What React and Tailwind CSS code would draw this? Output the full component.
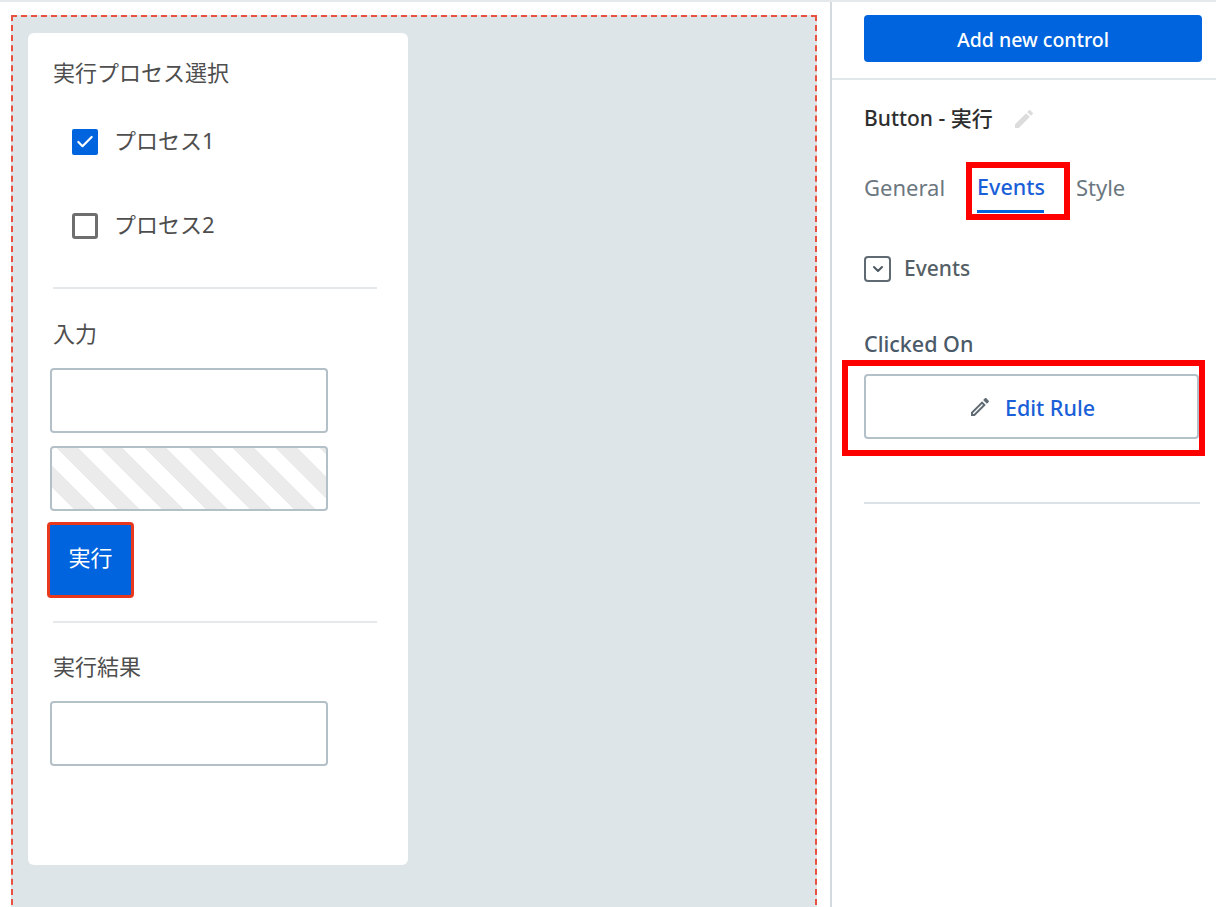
import { Check, ChevronDown } from "lucide-react";

const font = "font-['Noto_Sans','Noto_Sans_CJK_JP',sans-serif]";

function CheckRow({ label, checked }) {
  return (
    <div className="flex h-[26px] items-center gap-[16px] pl-[19px]">
      {checked ? (
        <span className="flex h-[26px] w-[26px] items-center justify-center rounded-[2px] bg-[#0064de]">
          <Check className="h-[20px] w-[20px] text-white" strokeWidth={2.6} />
        </span>
      ) : (
        <span className="h-[26px] w-[26px] rounded-[3px] border-[3px] border-[#6e6e6e] bg-white" />
      )}
      <span className="-mt-[5px] text-[22px] leading-[26px] text-[#4e4e4e]">{label}</span>
    </div>
  );
}

function TextBox({ striped }) {
  return (
    <div
      className={
        "h-[65px] w-[278px] rounded-[4px] border-2 border-[#b4c0c8] " +
        (striped
          ? "bg-[repeating-linear-gradient(45deg,#ffffff_0px,#ffffff_15.5px,#ebebeb_15.5px,#ebebeb_31px)]"
          : "bg-white")
      }
    />
  );
}

function EditIcon({ className }) {
  return (
    <svg viewBox="0 0 24 24" fill="currentColor" className={className}>
      <path d="M14.06 9.02l.92.92L5.92 19H5v-.92l9.06-9.06M17.66 3c-.25 0-.51.1-.7.29l-1.83 1.83 3.75 3.75 1.83-1.83c.39-.39.39-1.02 0-1.41l-2.34-2.34c-.2-.2-.45-.29-.71-.29zm-3.6 3.19L3 17.25V21h3.75L17.81 9.94l-3.75-3.75z" />
    </svg>
  );
}

function EditSolidIcon({ className }) {
  return (
    <svg viewBox="0 0 24 24" fill="currentColor" className={className}>
      <path d="M3 17.25V21h3.75L17.81 9.94l-3.75-3.75L3 17.25zM20.71 7.04a1 1 0 0 0 0-1.41l-2.34-2.34a1 1 0 0 0-1.41 0l-1.83 1.83 3.75 3.75 1.83-1.83z" />
    </svg>
  );
}

function Canvas() {
  return (
    <div className="h-full w-[830px] shrink-0 pl-[11px] pr-[13px] pt-[13px]">
      <div className="h-[900px] border-2 border-b-0 border-dashed border-[#e8503f] bg-[#dee5e9] pl-[15px] pt-[16px]">
        <div className="h-[832px] w-[380px] rounded-[6px] bg-white pl-[25px] pr-[31px] pt-[24px]">
          <div className="text-[22px] leading-[30px] text-[#4e4e4e]">実行プロセス選択</div>
          <div className="mt-[42px]">
            <CheckRow label="プロセス1" checked />
          </div>
          <div className="mt-[58px]">
            <CheckRow label="プロセス2" />
          </div>
          <div className="mt-[48px] h-[2px] bg-[#e6e9eb]" />
          <div className="mt-[29px] text-[22px] leading-[30px] text-[#4e4e4e]">入力</div>
          <div className="-ml-[3px] mt-[20px] flex flex-col items-start gap-[13px]">
            <TextBox />
            <TextBox striped />
          </div>
          <button className="-ml-[6px] mt-[11px] block h-[76px] w-[87px] rounded-[4px] border-[3px] border-[#e8391f] bg-[#0064de] pb-[6px] text-[22px] text-white">
            実行
          </button>
          <div className="mt-[23px] h-[2px] bg-[#e6e9eb]" />
          <div className="mt-[28px] text-[22px] leading-[30px] text-[#4e4e4e]">実行結果</div>
          <div className="-ml-[3px] mt-[20px]">
            <TextBox />
          </div>
        </div>
      </div>
    </div>
  );
}

function Sidebar() {
  return (
    <div className="relative h-full flex-1 border-l-2 border-[#d5dade]">
      <div className="h-[76px] pl-[32px] pt-[13px]">
        <button className="h-[47px] w-[338px] rounded-[4px] bg-[#0064de] pt-[2px] text-[19.5px] font-medium text-white">
          Add new control
        </button>
      </div>
      <div className="h-[2px] bg-[#e2e7ea]" />
      <div className="pl-[32px] pr-[16px]">
        <div className="mt-[23px] flex h-[32px] items-center gap-[19px]">
          <span className="text-[21px] font-medium text-[#2e2e2e]">Button - 実行</span>
          <EditSolidIcon className="h-[24px] w-[24px] text-[#dcdcdc]" />
        </div>
        <div className="mt-[36px] flex h-[44px] items-start text-[22px] leading-[30px]">
          <span className="mt-[1px] text-[#6b7780]">General</span>
          <span className="ml-[32px] mt-[1px] flex h-[41px] flex-col justify-between text-[21.5px] font-medium text-[#1a5fd8]">
            Events
            <span className="h-[3px] w-[67px] bg-[#0064de]" />
          </span>
          <span className="ml-[31px] mt-[1px] text-[#6b7780]">Style</span>
        </div>
        <div className="mt-[41px] flex h-[26px] items-center gap-[13px]">
          <span className="flex h-[26px] w-[27px] items-center justify-center rounded-[4px] border-2 border-[#5f6a72]">
            <ChevronDown className="h-[16px] w-[16px] text-[#4e5860]" strokeWidth={3} />
          </span>
          <span className="text-[21px] font-medium text-[#555f66]">Events</span>
        </div>
        <div className="mt-[47px] text-[21.5px] font-medium leading-[30px] text-[#4b5a68]">Clicked On</div>
        <button className="mt-[15px] flex h-[65px] w-[335px] items-center justify-center gap-[13px] rounded-[4px] border-2 border-[#b4c0c8] bg-white">
          <EditIcon className="h-[24px] w-[24px] text-[#5f6a72]" />
          <span className="mt-[3px] text-[21.5px] font-medium text-[#1a5fd8]">Edit Rule</span>
        </button>
        <div className="mt-[63px] h-[2px] bg-[#dde2e6]" />
      </div>
      {/* red callouts from the screenshot */}
      <div className="absolute left-[134px] top-[160px] h-[58px] w-[104px] border-[6px] border-[#ff0000]" />
      <div className="absolute left-[10px] top-[358px] h-[96px] w-[363px] border-[6px] border-[#ff0000]" />
    </div>
  );
}

export default function App() {
  return (
    <div className={"h-[907px] w-[1216px] overflow-hidden bg-white " + font}>
      <div className="h-[2px] bg-[#e5e9ec]" />
      <div className="flex h-[905px]">
        <Canvas />
        <Sidebar />
      </div>
    </div>
  );
}
